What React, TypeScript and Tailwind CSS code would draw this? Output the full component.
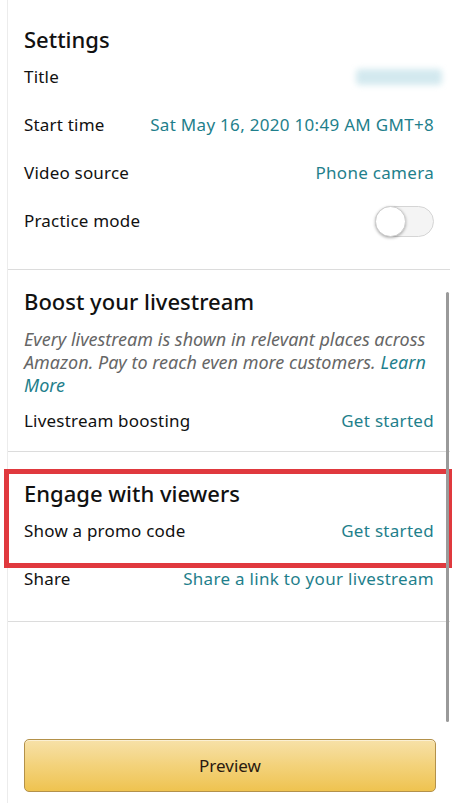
import React, { useState } from 'react';

const Row: React.FC<{ label: string; children?: React.ReactNode }> = ({ label, children }) => (
  <div className="h-12 flex items-center justify-between">
    <span className="text-[17px] tracking-[0.2px] text-[#111]">{label}</span>
    {children}
  </div>
);

const Link: React.FC<{ children: React.ReactNode }> = ({ children }) => (
  <span className="text-[17px] tracking-[0.3px] text-[#1f7f8c] whitespace-nowrap">{children}</span>
);

const App: React.FC = () => {
  const [practice, setPractice] = useState(false);

  return (
    <div className="min-h-[803px] w-[456px] bg-white font-['Noto_Sans',sans-serif] relative overflow-hidden">
      <div className="ml-[7px] w-[443px] min-h-[803px] border-l border-[#ececec] flex flex-col">
        {/* settings */}
        <section className="px-4 pt-[25px] pb-6 border-b border-[#dcdcdc]">
          <h2 className="text-[22px] leading-7 font-medium text-[#111]">Settings</h2>
          <Row label="Title">
            <div className="w-[86px] h-[16px] mr-[-8px] bg-[#d3e9ef] blur-[3px] rounded-sm" />
          </Row>
          <Row label="Start time">
            <Link>Sat May 16, 2020 10:49 AM GMT+8</Link>
          </Row>
          <Row label="Video source">
            <Link>Phone camera</Link>
          </Row>
          <Row label="Practice mode">
            <button
              onClick={() => setPractice(p => !p)}
              className={`relative w-[59px] h-[31px] rounded-full border border-[#d5d5d5] ${practice ? 'bg-[#1f7f8c]' : 'bg-[#f4f4f4]'}`}
            >
              <span
                className={`absolute top-[-1px] w-[31px] h-[31px] rounded-full bg-white border border-[#cfcfcf] shadow-[0_1px_3px_rgba(0,0,0,0.3)] ${practice ? 'left-[27px]' : 'left-[-1px]'}`}
              />
            </button>
          </Row>
        </section>

        {/* boost */}
        <section className="px-4 pt-[17px] pb-[6px] border-b border-[#dcdcdc]">
          <h2 className="text-[22px] leading-7 font-medium text-[#111]">Boost your livestream</h2>
          <p className="mt-[13px] text-[18px] leading-[23px] italic text-[#666]">
            Every livestream is shown in relevant places across Amazon. Pay to reach even more customers.{' '}
            <span className="text-[#1f7f8c]">Learn More</span>
          </p>
          <Row label="Livestream boosting">
            <Link>Get started</Link>
          </Row>
        </section>

        {/* engage */}
        <section className="relative px-4 pt-[27px] pb-[18px] border-b border-[#dcdcdc]">
          <div className="absolute top-[17px] left-[-4px] right-[-2px] h-[99px] border-[5px] border-[#e0393e] pointer-events-none" />
          <h2 className="text-[22px] leading-7 font-medium text-[#111]">Engage with viewers</h2>
          <Row label="Show a promo code">
            <Link>Get started</Link>
          </Row>
          <Row label="Share">
            <Link>Share a link to your livestream</Link>
          </Row>
        </section>

        <div className="flex-1" />

        <div className="pl-4 pr-[14px] pb-[11px]">
          <button className="w-full h-[53px] rounded-[5px] border border-[#b3914a] bg-gradient-to-b from-[#f7e1a8] via-[#f3d27a] to-[#efc34f] text-[17px] text-[#2a1a10] shadow-[inset_0_1px_0_rgba(255,255,255,0.5)]">
            Preview
          </button>
        </div>
      </div>

      {/* scrollbar */}
      <div className="absolute left-[446px] top-[292px] w-[3px] h-[430px] rounded-full bg-[#9a9a9a]" />
    </div>
  );
};

export default App;
